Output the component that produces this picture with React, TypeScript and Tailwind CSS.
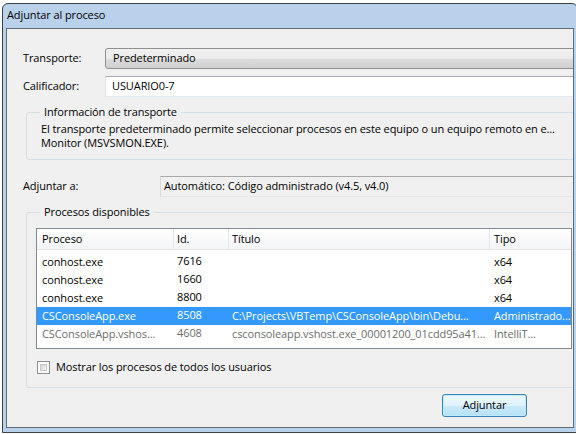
import React from "react";

type Proc = {
  name: string;
  id: string;
  title: string;
  type: string;
  selected?: boolean;
  dim?: boolean;
};

const procs: Proc[] = [
  { name: "conhost.exe", id: "7616", title: "", type: "x64" },
  { name: "conhost.exe", id: "1660", title: "", type: "x64" },
  { name: "conhost.exe", id: "8800", title: "", type: "x64" },
  {
    name: "CSConsoleApp.exe",
    id: "8508",
    title: "C:\\Projects\\VBTemp\\CSConsoleApp\\bin\\Debu...",
    type: "Administrado...",
    selected: true,
  },
  {
    name: "CSConsoleApp.vshos...",
    id: "4608",
    title: "csconsoleapp.vshost.exe_00001200_01cdd95a41...",
    type: "IntelliT...",
    dim: true,
  },
];

export default function App() {
  return (
    <div className="w-[576px] h-[434px] overflow-hidden bg-white pt-[3px] pl-[2px] font-['Open_Sans',sans-serif] text-[11px] tracking-[-0.1px] text-black">
      {/* window frame */}
      <div className="w-[576px] h-[430px] border border-[#3d4247] rounded-t-[6px] bg-[#b9d1ea] flex flex-col px-[3px] pb-[4px]">
        <div className="h-[24px] flex items-center pl-[1px] pb-[1px] whitespace-nowrap">
          Adjuntar al proceso
        </div>

        {/* dialog body */}
        <div className="flex-1 border border-[#5f6b76] bg-[#f0f0f0] overflow-hidden flex flex-col">
          {/* Transporte */}
          <div className="mt-[19px] ml-[16px] flex items-center h-[21px]">
            <div className="w-[82px] whitespace-nowrap">Transporte:</div>
            <div className="flex-1 -mr-[4px] h-[21px] flex items-center pl-[7px] rounded-[3px] border border-[#8e8f8f] bg-[linear-gradient(to_bottom,#f2f2f2_0%,#ebebeb_50%,#dddddd_51%,#cfcfcf_100%)] whitespace-nowrap">
              Predeterminado
            </div>
          </div>

          {/* Calificador */}
          <div className="mt-[7px] ml-[16px] flex items-center h-[21px]">
            <div className="w-[82px] whitespace-nowrap">Calificador:</div>
            <div className="flex-1 -mr-[4px] h-[21px] flex items-center pl-[6px] bg-white border border-[#e2e3ea] border-t-[#abadb3] border-b-[#e3e9ef] whitespace-nowrap">
              USUARIO0-7
            </div>
          </div>

          {/* Información de transporte */}
          <fieldset className="mt-[7px] ml-[19px] -mr-[10px] border border-[#d5dfe5] rounded-[3px] pl-[14px] pt-[2px] pb-[9px]">
            <legend className="ml-[-1px] px-[4px] leading-[16px] whitespace-nowrap">
              Información de transporte
            </legend>
            <p className="leading-[14px] whitespace-nowrap">
              El transporte predeterminado permite seleccionar procesos en este equipo o un equipo remoto en e...
            </p>
            <p className="leading-[14px] whitespace-nowrap">Monitor (MSVSMON.EXE).</p>
          </fieldset>

          {/* Adjuntar a */}
          <div className="mt-[16px] ml-[16px] flex items-center h-[21px]">
            <div className="w-[137px] whitespace-nowrap">Adjuntar a:</div>
            <div className="flex-1 -mr-[4px] h-[21px] flex items-center pl-[3px] bg-[#f0f0f0] border border-[#dadada] border-t-[#a9a9a9] border-b-[#e6e6e6] whitespace-nowrap">
              Automático: Código administrado (v4.5, v4.0)
            </div>
          </div>

          {/* Procesos disponibles */}
          <fieldset className="mt-[7px] ml-[19px] -mr-[10px] border border-[#d5dfe5] rounded-[3px] pl-[9px] pr-[10px] pt-[8px] pb-[13px]">
            <legend className="ml-[4px] px-[4px] leading-[16px] whitespace-nowrap">
              Procesos disponibles
            </legend>

            <div className="h-[121px] border border-[#828790] bg-white overflow-hidden">
              <div className="h-[21px] grid grid-cols-[137px_55px_261px_1fr] bg-[linear-gradient(to_bottom,#ffffff,#f3f4f6)] border-b border-[#e5e5e5]">
                <div className="pl-[5px] flex items-center border-r border-[#e3e8ee]">Proceso</div>
                <div className="pl-[3px] flex items-center border-r border-[#e3e8ee]">Id.</div>
                <div className="pl-[3px] flex items-center border-r border-[#e3e8ee]">Título</div>
                <div className="pl-[4px] flex items-center">Tipo</div>
              </div>
              <div className="pt-[3px]">
                {procs.map((p, i) => (
                  <div
                    key={i}
                    className={`h-[18px] grid grid-cols-[137px_55px_261px_1fr] whitespace-nowrap ${
                      p.selected
                        ? "bg-[#3399ff] text-white"
                        : p.dim
                        ? "text-[#6d6d6d]"
                        : ""
                    }`}
                  >
                    <div className="pl-[5px] flex items-center overflow-hidden">{p.name}</div>
                    <div className="pl-[3px] flex items-center pb-[2px]">{p.id}</div>
                    <div className="pl-[3px] flex items-center overflow-hidden">{p.title}</div>
                    <div className="pl-[4px] flex items-center overflow-hidden">{p.type}</div>
                  </div>
                ))}
              </div>
            </div>

            <div className="mt-[12px] ml-[1px] flex items-center h-[13px] gap-[6px]">
              <div className="w-[13px] h-[13px] border border-[#8f8f8f] bg-white p-[2px]">
                <div className="w-full h-full border border-[#c6c6c6] bg-[linear-gradient(135deg,#d4d4d4,#f8f8f8)]" />
              </div>
              <span className="whitespace-nowrap">Mostrar los procesos de todos los usuarios</span>
            </div>
          </fieldset>

          {/* Adjuntar button */}
          <div className="mt-[6px] flex justify-end pr-[46px]">
            <button className="w-[85px] h-[23px] rounded-[3px] border border-[#3c7fb1] bg-[linear-gradient(to_bottom,#ecf7fd_0%,#dff2fc_50%,#cbebfb_51%,#b6e0f6_100%)] shadow-[inset_0_0_0_1px_rgba(190,235,255,0.9)] flex items-center justify-center">
              Adjuntar
            </button>
          </div>
        </div>
      </div>
    </div>
  );
}
